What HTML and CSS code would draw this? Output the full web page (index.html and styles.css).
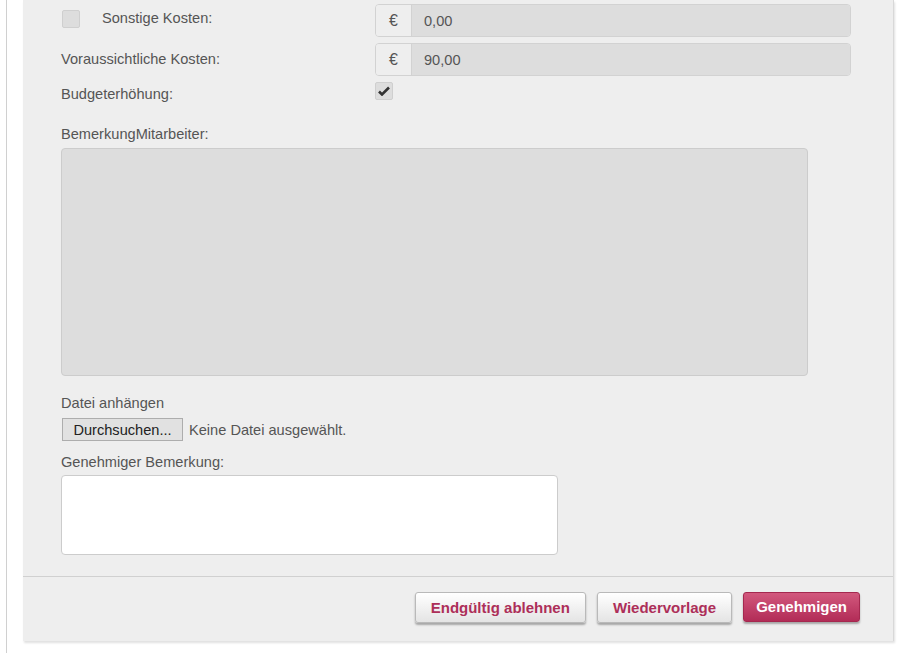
FILE: index.html
```html
<!DOCTYPE html>
<html lang="de">
<head>
<meta charset="utf-8">
<title>Genehmigung</title>
<link rel="stylesheet" href="styles.css">
</head>
<body>
<div class="page">
  <div class="panel">
    <div class="body">
      <div class="row row-first">
        <div class="label label-first">
          <span class="cb"></span>
          <span class="cb-text">Sonstige Kosten:</span>
        </div>
        <div class="input-group">
          <span class="addon">€</span>
          <span class="field">0,00</span>
        </div>
      </div>
      <div class="row row-second">
        <div class="label label-second">Voraussichtliche Kosten:</div>
        <div class="input-group">
          <span class="addon">€</span>
          <span class="field">90,00</span>
        </div>
      </div>
      <div class="row row-third">
        <div class="label label-third">Budgeterhöhung:</div>
        <span class="cb cb-checked">
          <svg width="12" height="10" viewBox="0 0 12 10"><path d="M1 5.5 L4 8.5 L11 1.5" fill="none" stroke="#333" stroke-width="2.6"/></svg>
        </span>
      </div>
      <div class="block-label bemerkung">BemerkungMitarbeiter:</div>
      <div class="textarea-ro"></div>
      <div class="block-label datei">Datei anhängen</div>
      <div class="file-row">
        <span class="file-btn">Durchsuchen...</span>
        <span class="file-text">Keine Datei ausgewählt.</span>
      </div>
      <div class="block-label genehmiger">Genehmiger Bemerkung:</div>
      <div class="textarea-w"></div>
    </div>
    <div class="footer">
      <span class="btn">Endgültig ablehnen</span>
      <span class="btn">Wiedervorlage</span>
      <span class="btn btn-primary">Genehmigen</span>
    </div>
  </div>
</div>
</body>
</html>
```
FILE: styles.css
```css
html, body {
  margin: 0;
  padding: 0;
  background: #ffffff;
}
body {
  font-family: "Liberation Sans", Arial, sans-serif;
  font-size: 14.6px;
  line-height: 20px;
  color: #555555;
}
.page {
  margin-left: 6px;
  border-left: 1px solid #d0d0d0;
  height: 653px;
  padding-left: 16px;
  box-sizing: border-box;
  overflow: hidden;
}
.panel {
  width: 871px;
  height: 641px;
  background: #eeeeee;
  border-right: 1px solid #d8d8d8;
  box-sizing: border-box;
  box-shadow: 1px 2px 2px rgba(0, 0, 0, 0.12);
  display: flex;
  flex-direction: column;
}
.body {
  padding: 4px 0 0 38px;
  height: 577px;
  box-sizing: border-box;
  border-bottom: 1px solid #d0d0d0;
  display: flex;
  flex-direction: column;
  align-items: flex-start;
}
.row {
  display: flex;
  align-items: flex-start;
}
.row-second { margin-top: 6px; }
.row-third { margin-top: 6px; }
.label {
  width: 314px;
  flex: none;
}
.label-first {
  display: flex;
  align-items: flex-start;
  padding-top: 6px;
}
.label-first .cb { margin-left: 1px; }
.cb-text { margin-left: 22px; margin-top: -2px; }
.label-second { padding-top: 6px; }
.label-third { padding-top: 2px; }
.cb {
  width: 16px;
  height: 16px;
  border: 1px solid #cfcfcf;
  border-radius: 2px;
  background: #dddddd;
  display: inline-flex;
  align-items: center;
  justify-content: center;
  flex: none;
}
.input-group {
  display: flex;
  width: 476px;
  height: 33px;
  border: 1px solid #d2d2d2;
  border-radius: 4px;
  box-sizing: border-box;
  overflow: hidden;
}
.addon {
  width: 35px;
  flex: none;
  background: #eeeeee;
  border-right: 1px solid #d2d2d2;
  display: flex;
  align-items: center;
  justify-content: center;
  color: #555;
  font-size: 16px;
}
.field {
  flex: 1;
  background: #dddddd;
  padding-left: 12px;
  display: flex;
  align-items: center;
  color: #555;
}
.bemerkung { margin-top: 20px; }
.textarea-ro {
  margin-top: 4px;
  width: 747px;
  height: 228px;
  box-sizing: border-box;
  background: #dddddd;
  border: 1px solid #cccccc;
  border-radius: 4px;
}
.datei { margin-top: 17px; }
.file-row {
  display: flex;
  align-items: center;
  margin-top: 5px;
}
.file-btn {
  margin-left: 1px;
  width: 121px;
  height: 23px;
  box-sizing: border-box;
  border: 1px solid #adadad;
  background: #e1e1e1;
  color: #222;
  display: flex;
  align-items: center;
  justify-content: center;
}
.file-text { margin-left: 6px; }
.genehmiger { margin-top: 11px; }
.textarea-w {
  margin-top: 3px;
  width: 497px;
  height: 80px;
  box-sizing: border-box;
  background: #ffffff;
  border: 1px solid #cccccc;
  border-radius: 4px;
}
.footer {
  flex: 1;
  display: flex;
  justify-content: flex-end;
  align-items: flex-start;
  gap: 11px;
  padding: 15px 33px 0 0;
}
.btn {
  height: 31px;
  padding: 0 15px;
  box-sizing: border-box;
  border: 1px solid #b9b9b9;
  border-radius: 3px;
  background: linear-gradient(#ffffff, #e4e4e4);
  box-shadow: 0 2px 2px rgba(0, 0, 0, 0.3);
  color: #ad2f59;
  font-weight: bold;
  font-size: 15px;
  display: flex;
  align-items: center;
}
.btn-primary {
  background: linear-gradient(#d2587d, #b22c57);
  border-color: #a5284f;
  color: #ffffff;
  height: 30px;
  padding: 0 12px;
}
```
